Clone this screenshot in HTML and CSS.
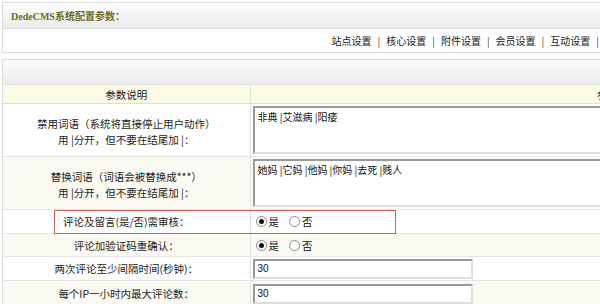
FILE: index.html
```html
<!DOCTYPE html>
<html>
<head>
<meta charset="utf-8">
<link rel="stylesheet" href="styles.css">
</head>
<body>
<div class="page">
  <div class="box top-box">
    <div class="title-bar"><span class="title">DedeCMS系统配置参数：</span></div>
    <div class="nav-bar">
      <span>站点设置</span><span class="sep">|</span><span>核心设置</span><span class="sep">|</span><span>附件设置</span><span class="sep">|</span><span>会员设置</span><span class="sep">|</span><span>互动设置</span><span class="sep">|</span>
    </div>
  </div>
  <div class="box table-box">
    <div class="head-bar"></div>
    <table class="cfg">
      <colgroup><col class="c1"><col class="c2"></colgroup>
      <tr class="hd"><td>参数说明</td><td>参数值</td></tr>
      <tr class="r-tall w">
        <td class="desc">禁用词语（系统将直接停止用户动作）<br>用 |分开，但不要在结尾加 |：</td>
        <td class="val"><div class="ta">非典 |艾滋病 |阳痿</div></td>
      </tr>
      <tr class="r-tall y">
        <td class="desc">替换词语（词语会被替换成***）<br>用 |分开，但不要在结尾加 |：</td>
        <td class="val"><div class="ta">她妈 |它妈 |他妈 |你妈 |去死 |贱人</div></td>
      </tr>
      <tr class="r3 w mark">
        <td>评论及留言(是/否)需审核：</td>
        <td class="val"><div class="radios"><span class="rb on"></span>是<span class="rb"></span>否</div><div class="redbox"></div></td>
      </tr>
      <tr class="r4 y">
        <td>评论加验证码重确认：</td>
        <td class="val"><div class="radios"><span class="rb on"></span>是<span class="rb"></span>否</div></td>
      </tr>
      <tr class="r5 w">
        <td>两次评论至少间隔时间(秒钟)：</td>
        <td class="val"><div class="inp">30</div></td>
      </tr>
      <tr class="r6 y">
        <td>每个IP一小时内最大评论数：</td>
        <td class="val"><div class="inp">30</div></td>
      </tr>
    </table>
  </div>
</div>
</body>
</html>
```
FILE: styles.css
```css
html, body {
  margin: 0;
  padding: 0;
  background: #fff;
  overflow: hidden;
}
body {
  font-family: "Noto Sans CJK SC", "Liberation Sans", sans-serif;
  font-size: 10.5px;
  color: #222;
}
.page {
  width: 980px;
  padding: 2px 0 0 2px;
}
.box {
  border: 1px solid #dcdcdc;
}
.title-bar {
  height: 25px;
  background: linear-gradient(#fdfdfd, #ececec);
  border-bottom: 1px solid #dedede;
  display: flex;
  align-items: center;
  padding-left: 8px;
}
.title {
  font-family: "Liberation Serif", "Noto Sans CJK SC", serif;
  font-weight: bold;
  font-size: 10px;
  color: #6b6b1e;
}
.nav-bar {
  height: 23px;
  width: 596px;
  display: flex;
  align-items: center;
  justify-content: flex-end;
  white-space: nowrap;
  color: #1a1a1a;
  font-size: 10px;
}
.nav-bar .sep {
  margin: 0 6px;
  color: #444;
}
.nav-bar .sep:last-child {
  margin-right: 0;
}
.table-box {
  margin-top: 6px;
}
.head-bar {
  height: 24px;
  background: linear-gradient(#fdfdfd, #ececec);
  border-bottom: 1px solid #e2e2e2;
}
.cfg {
  border-collapse: collapse;
  width: 972px;
  table-layout: fixed;
}
.cfg col.c1 { width: 247px; }
.cfg td {
  padding: 0;
  border-bottom: 1px solid #e6e6e6;
  text-align: center;
  vertical-align: middle;
  line-height: 17px;
}
.cfg td.desc {
  line-height: 16px;
  padding-top: 3px;
}
.cfg td:first-child {
  border-right: 1px solid #e0e0e0;
}
.cfg tr.hd td {
  height: 18px;
  background: #fbfce3;
  border-bottom: 1px solid #dcdcd0;
}
.cfg tr.w td { background: #fff; }
.cfg tr.y td { background: #fafaf2; }
.cfg tr.r-tall td { height: 51px; }
.cfg tr.r-tall td.desc { height: 48px; }
.cfg tr.r3 td { height: 23px; }
.cfg tr.r4 td { height: 22px; }
.cfg tr.r5 td { height: 23px; }
.cfg tr.r6 td { height: 25px; }
.cfg td.val {
  text-align: left;
  padding-left: 2px;
  position: relative;
}
.ta {
  height: 42px;
  margin: 2px 0;
  border: 2px solid #999;
  border-right-color: #ddd;
  border-bottom-color: #ddd;
  background: #fff;
  padding: 1px 3px;
  line-height: 16px;
  color: #111;
  font-size: 10px;
}
.radios {
  display: flex;
  align-items: center;
  color: #111;
  padding-left: 3px;
  font-size: 10.5px;
}
.rb {
  width: 11px;
  height: 11px;
  box-sizing: border-box;
  border: 1px solid #8a8a8a;
  border-radius: 50%;
  background: #fff;
  margin-right: 2px;
  position: relative;
}
.radios .rb:nth-of-type(2) {
  margin-left: 10px;
}
.rb.on::after {
  content: "";
  position: absolute;
  left: 2px;
  top: 2px;
  width: 5px;
  height: 5px;
  border-radius: 50%;
  background: #111;
}
.inp {
  width: 210px;
  height: 16px;
  border: 2px solid #999;
  border-right-color: #ddd;
  border-bottom-color: #ddd;
  background: #fff;
  padding: 0 3px;
  line-height: 16px;
  color: #111;
  font-family: "Liberation Sans", sans-serif;
  font-size: 10px;
}
.redbox {
  position: absolute;
  left: -197px;
  top: 0;
  width: 340px;
  height: 22px;
  border: 1px solid #d06060;
  pointer-events: none;
}
```
